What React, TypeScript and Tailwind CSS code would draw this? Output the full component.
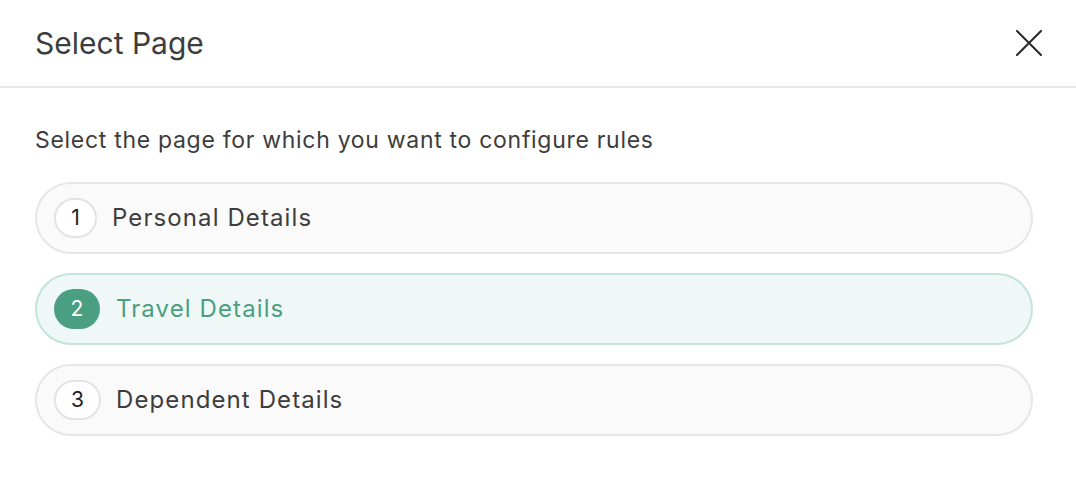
import React from "react";

const pages = [
  { id: 1, name: "Personal Details" },
  { id: 2, name: "Travel Details" },
  { id: 3, name: "Dependent Details" },
];

function CloseIcon() {
  return (
    <svg width="26" height="26" viewBox="0 0 26 26" fill="none">
      <path d="M1 1L25 25M25 1L1 25" stroke="#262626" strokeWidth="2" strokeLinecap="round" />
    </svg>
  );
}

export default function App() {
  const selected = 2;
  return (
    <div className="w-[1076px] h-[488px] bg-white font-['Inter',sans-serif] text-[#3d3d3d]">
      <div className="flex h-[88px] items-center justify-between border-b-2 border-[#e8e8e8] pl-[35px] pr-[34px]">
        <h1 className="text-[30px] leading-none">Select Page</h1>
        <button className="flex items-center justify-center">
          <CloseIcon />
        </button>
      </div>
      <div className="pl-[35px] pr-[43px] pt-[36px]">
        <p className="text-[23px] leading-[32px] tracking-[0.7px]">Select the page for which you want to configure rules</p>
        <div className="mt-[26px] flex flex-col gap-[19px]">
          {pages.map((p) => {
            const active = p.id === selected;
            return (
              <div
                key={p.id}
                className={
                  active
                    ? "flex h-[72px] items-center gap-[16px] rounded-full border-2 border-[#c2e4da] bg-[#eff8f6] pl-[17px]"
                    : "flex h-[72px] items-center gap-[15px] rounded-full border-2 border-[#e6e6e6] bg-[#fafafa] pl-[17px]"
                }
              >
                <span
                  className={
                    active
                      ? "flex h-[40px] min-w-[46px] items-center justify-center rounded-full bg-[#4a9f83] px-[15px] text-[21px] text-white"
                      : "flex h-[40px] min-w-[43px] items-center justify-center rounded-full border-2 border-[#e3e3e3] bg-white px-[15px] text-[21px] text-[#222]"
                  }
                >
                  {p.id}
                </span>
                <span
                  className={
                    active
                      ? "text-[24px] tracking-[1.1px] text-[#4a9f83]"
                      : "text-[24px] tracking-[1.1px] text-[#3d3d3d]"
                  }
                >
                  {p.name}
                </span>
              </div>
            );
          })}
        </div>
      </div>
    </div>
  );
}
